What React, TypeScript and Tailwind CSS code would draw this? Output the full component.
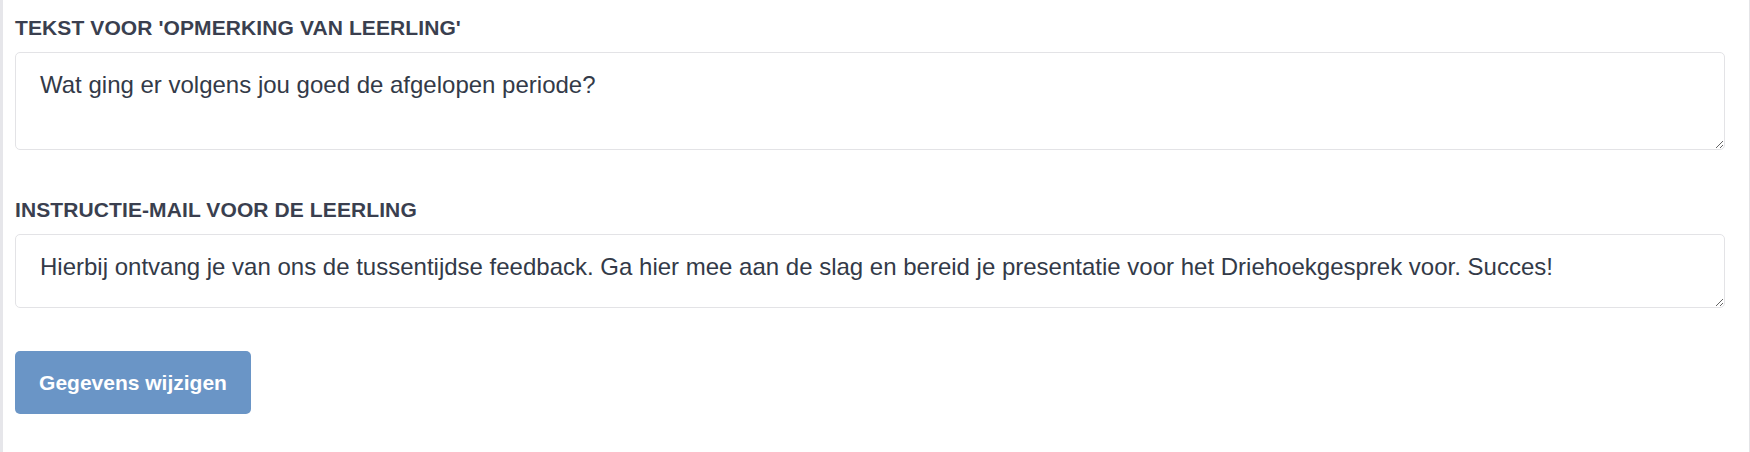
import { useState } from 'react';

const font = { fontFamily: '"Liberation Sans", Arial, sans-serif' };

interface FieldProps {
  label: string;
  value: string;
  onChange: (v: string) => void;
  heightClass: string;
}

function Field({ label, value, onChange, heightClass }: FieldProps) {
  return (
    <div>
      <label className="block text-[21px] leading-[30px] font-bold uppercase tracking-[0.1px] text-[#3a3f4f] mb-[9px]">
        {label}
      </label>
      <textarea
        value={value}
        onChange={(e) => onChange(e.target.value)}
        className={`block w-full ${heightClass} border border-[#e3e3e6] rounded-[5px] px-[24px] pt-[14px] pb-[10px] text-[24px] leading-[36px] text-[#333a48] bg-white outline-none`}
      />
    </div>
  );
}

export default function App() {
  const [remark, setRemark] = useState('Wat ging er volgens jou goed de afgelopen periode?');
  const [mail, setMail] = useState(
    'Hierbij ontvang je van ons de tussentijdse feedback. Ga hier mee aan de slag en bereid je presentatie voor het Driehoekgesprek voor. Succes!'
  );

  return (
    <div style={font} className="w-[1750px] h-[452px] bg-white flex">
      {/* Left rail */}
      <div className="w-[3px] bg-[#e6e6ea]" />

      {/* Form */}
      <div className="flex-1 pl-[12px] pr-[24px] pt-[13px]">
        <Field
          label="Tekst voor 'opmerking van leerling'"
          value={remark}
          onChange={setRemark}
          heightClass="h-[98px]"
        />

        <div className="mt-[45px]">
          <Field
            label="Instructie-mail voor de leerling"
            value={mail}
            onChange={setMail}
            heightClass="h-[74px]"
          />
        </div>

        <button className="mt-[43px] w-[236px] h-[63px] rounded-[5px] bg-[#6a95c6] text-white text-[21px] font-bold">
          Gegevens wijzigen
        </button>
      </div>

      {/* Right rule */}
      <div className="w-px bg-[#e4e4e7]" />
    </div>
  );
}
